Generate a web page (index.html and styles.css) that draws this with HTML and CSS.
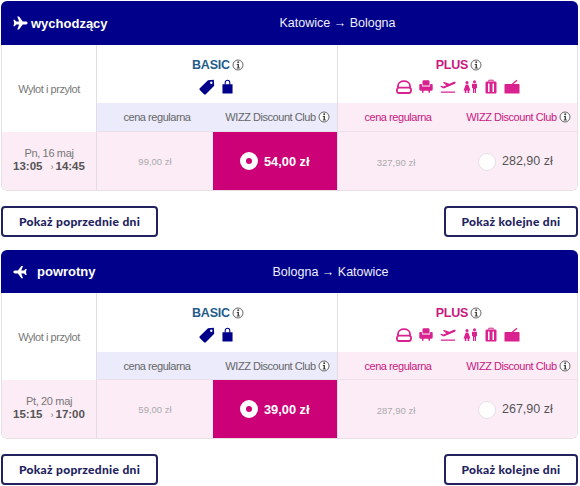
FILE: index.html
```html
<!DOCTYPE html>
<html lang="pl">
<head>
<meta charset="utf-8">
<title>Wybór lotu</title>
<link rel="stylesheet" href="styles.css">
</head>
<body>
<svg class="defs" width="0" height="0" aria-hidden="true">
  <defs>
    <symbol id="plane" viewBox="0 0 16 14"><path d="M15.6 7c0-.9-1-1.600-2-1.600H10.400L6.400 0H4.500L6.600 5.400H3.400L1.800 3.500H.4L1.200 7 .4 10.500H1.800L3.400 8.600H6.600L4.500 14H6.400L10.400 8.600H13.600C14.600 8.600 15.600 7.900 15.600 7Z"/></symbol>
    <symbol id="info" viewBox="0 0 12 12"><circle cx="6" cy="6" r="5" fill="#fff" stroke="#666" stroke-width="1"/><circle cx="6.200" cy="3.300" r="1" fill="#444"/><path d="M4.800 5H7V8.500H7.800V9.500H4.800V8.500H5.600V6H4.800Z" fill="#444"/></symbol>
    <symbol id="tag" viewBox="0 0 16 16"><path d="M9 1.200L14.800 .8 15.200 6.800 6.800 15.200C6.200 15.800 5.500 15.800 5 15.300L.8 11C.3 10.500.3 9.800.8 9.300Z M12.300 2.500A1.200 1.200 0 1 0 12.300 4.900 1.200 1.200 0 1 0 12.300 2.500Z" fill-rule="evenodd"/></symbol>
    <symbol id="bag" viewBox="0 0 12 16"><path d="M.5 5.500H11.500V15.500H.5Z"/><path d="M3.500 6V3.500C3.500 .5 8.500 .5 8.500 3.500V6" fill="none" stroke="currentColor" stroke-width="1.200"/></symbol>
    <symbol id="seat" viewBox="0 0 16 14"><path d="M2 8V6C2 -.4 14 -.4 14 6V8" fill="none" stroke="currentColor" stroke-width="1.800"/><path d="M3 7.600H13C15.800 7.600 15.800 13 13 13H3C.2 13 .2 7.600 3 7.600Z" fill="none" stroke="currentColor" stroke-width="1.800"/></symbol>
    <symbol id="chair" viewBox="0 0 14 13"><path d="M3.500 1.500C3.500 .7 4.200 .2 5 .2H9C9.800 .2 10.500 .7 10.500 1.500V5.500H3.500Z"/><path d="M.3 4.800C.3 3.800 3 3.800 3 4.800V6.500H11V4.800C11 3.800 13.700 3.800 13.700 4.800V9.500C13.700 10.300 13 10.800 12 10.800H11V12.800H9.500V10.800H4.500V12.800H3V10.800H2C1 10.800.3 10.300.3 9.500Z"/></symbol>
    <symbol id="takeoff" viewBox="0 0 16 13"><path d="M.3 6.500L1.300 5.700 3.500 6.400 6.300 5.200 2.800 2.600 4.300 2 9.400 3.700 12.800 2.200C14.300 1.500 15.700 1.800 15.700 2.500 15.700 3.200 14.800 3.800 13.800 4.300L4.300 8.300C3.600 8.600 3 8.400 2.500 8.100Z"/><path d="M1 11.500H15V12.800H1Z"/></symbol>
    <symbol id="people" viewBox="0 0 15 13"><circle cx="4" cy="2.500" r="1.500"/><circle cx="11.500" cy="1.700" r="1.500"/><path d="M2.800 4.500H5.200L7.500 10.500H.5ZM1.800 10.500H3.400V13H1.800ZM4.600 10.500H6.200V13H4.600Z"/><path d="M9 3.800H14V8.200H13V13H11.800V9H11.200V13H10V8.200H9Z"/></symbol>
    <symbol id="case" viewBox="0 0 12 14"><path d="M3.800 2V.7H8.200V2" fill="none" stroke="currentColor" stroke-width="1"/><path d="M2 2H10C11 2 11.500 2.500 11.500 3.500V12.500C11.500 13.500 11 14 10 14H2C1 14 .5 13.500 .5 12.500V3.500C.5 2.500 1 2 2 2ZM3 4V12.500H4.500V4ZM7.500 4V12.500H9V4Z" fill-rule="evenodd"/></symbol>
    <symbol id="laptop" viewBox="0 0 16 14"><path d="M.5 5.500C.5 4.900 .9 4.500 1.500 4.500H14.500C15.100 4.500 15.500 4.900 15.500 5.500V14H.5Z"/><path d="M8.500 4.500L13 .7" fill="none" stroke="currentColor" stroke-width="1.300"/></symbol>
  </defs>
</svg>

<main class="page">
  <section class="leg">
    <div class="panel">
      <header class="bar bar-out">
        <div class="bar-dir"><svg class="plane"><use href="#plane"/></svg><span>wychodzący</span></div>
        <div class="bar-route">Katowice → Bologna</div>
      </header>
      <div class="tbl">
        <div class="time-head">Wylot i przylot</div>
        <div class="fare basic">
          <div class="fare-name">BASIC<svg class="info"><use href="#info"/></svg></div>
          <div class="fare-icons">
            <svg class="ic-tag"><use href="#tag"/></svg><svg class="ic-bag"><use href="#bag"/></svg>
          </div>
        </div>
        <div class="fare plus">
          <div class="fare-name">PLUS<svg class="info"><use href="#info"/></svg></div>
          <div class="fare-icons">
            <svg class="ic-seat"><use href="#seat"/></svg><svg class="ic-chair"><use href="#chair"/></svg><svg class="ic-takeoff"><use href="#takeoff"/></svg><svg class="ic-people"><use href="#people"/></svg><svg class="ic-case"><use href="#case"/></svg><svg class="ic-laptop"><use href="#laptop"/></svg>
          </div>
        </div>
        <div class="sub sub-basic"><span class="sub-reg">cena regularna</span><span class="sub-club">WIZZ Discount Club<svg class="info"><use href="#info"/></svg></span></div>
        <div class="sub sub-plus"><span class="sub-reg">cena regularna</span><span class="sub-club">WIZZ Discount Club<svg class="info"><use href="#info"/></svg></span></div>
        <div class="time"><div class="day">Pn, 16 maj</div><div class="hours"><b>13:05</b><i>›</i><b>14:45</b></div></div>
        <div class="prices price-basic"><span class="old">99,00 zł</span><span class="sel"><span class="radio on"></span>54,00 zł</span></div>
        <div class="prices price-plus"><span class="old">327,90 zł</span><span class="opt"><span class="radio"></span>282,90 zł</span></div>
      </div>
    </div>
    <div class="nav">
      <button class="btn btn-prev">Pokaż poprzednie dni</button>
      <button class="btn btn-next">Pokaż kolejne dni</button>
    </div>
  </section>

  <section class="leg">
    <div class="panel">
      <header class="bar bar-back">
        <div class="bar-dir"><svg class="plane flip"><use href="#plane"/></svg><span>powrotny</span></div>
        <div class="bar-route">Bologna → Katowice</div>
      </header>
      <div class="tbl">
        <div class="time-head">Wylot i przylot</div>
        <div class="fare basic">
          <div class="fare-name">BASIC<svg class="info"><use href="#info"/></svg></div>
          <div class="fare-icons">
            <svg class="ic-tag"><use href="#tag"/></svg><svg class="ic-bag"><use href="#bag"/></svg>
          </div>
        </div>
        <div class="fare plus">
          <div class="fare-name">PLUS<svg class="info"><use href="#info"/></svg></div>
          <div class="fare-icons">
            <svg class="ic-seat"><use href="#seat"/></svg><svg class="ic-chair"><use href="#chair"/></svg><svg class="ic-takeoff"><use href="#takeoff"/></svg><svg class="ic-people"><use href="#people"/></svg><svg class="ic-case"><use href="#case"/></svg><svg class="ic-laptop"><use href="#laptop"/></svg>
          </div>
        </div>
        <div class="sub sub-basic"><span class="sub-reg">cena regularna</span><span class="sub-club">WIZZ Discount Club<svg class="info"><use href="#info"/></svg></span></div>
        <div class="sub sub-plus"><span class="sub-reg">cena regularna</span><span class="sub-club">WIZZ Discount Club<svg class="info"><use href="#info"/></svg></span></div>
        <div class="time"><div class="day">Pt, 20 maj</div><div class="hours"><b>15:15</b><i>›</i><b>17:00</b></div></div>
        <div class="prices price-basic"><span class="old">59,00 zł</span><span class="sel"><span class="radio on"></span>39,00 zł</span></div>
        <div class="prices price-plus"><span class="old">287,90 zł</span><span class="opt"><span class="radio"></span>267,90 zł</span></div>
      </div>
    </div>
    <div class="nav">
      <button class="btn btn-prev">Pokaż poprzednie dni</button>
      <button class="btn btn-next">Pokaż kolejne dni</button>
    </div>
  </section>
</main>
</body>
</html>
```
FILE: styles.css
```css
* { box-sizing: border-box; }
html, body { margin: 0; padding: 0; background: #fff; }
body { font-family: "Liberation Sans", Arial, sans-serif; color: #666; overflow: hidden; }
.defs { position: absolute; }
.page { width: 580px; height: 486px; padding: 1px 1px 0 1px; display: flex; flex-direction: column; gap: 13px; }
.leg { width: 577px; }
.panel { border-radius: 6px; overflow: hidden; }
.bar { display: grid; grid-template-columns: 96px 1fr; background: #00008a; color: #fff; height: 44px; align-items: center; }
.bar-back { height: 43px; }
.bar-dir { grid-column: 1; grid-row: 1; display: flex; align-items: center; font-size: 13px; font-weight: 700; white-space: nowrap; padding-left: 12px; }
.bar-route { grid-column: 1 / 3; grid-row: 1; font-size: 12.5px; text-align: center; padding-left: 96px; color: #f0f0fa; }
.bar-back .bar-route { padding-left: 82px; }
.plane { width: 15px; height: 14px; fill: #fff; margin-right: 3px; flex: none; }
.plane.flip { transform: scaleX(-1); width: 14px; margin-right: 10px; }
.tbl { display: grid; grid-template-columns: 95px 241px 239px; grid-template-rows: 58px 29px 58px; border: solid #e6dfe6; border-width: 0 1px 1px 1px; border-radius: 0 0 6px 6px; overflow: hidden; }
.bar-back + .tbl { grid-template-rows: 59px 28px 58px; }
.time-head { grid-column: 1; grid-row: 1 / 3; display: flex; align-items: center; justify-content: center; font-size: 11px; letter-spacing: -.45px; color: #777; border-right: 1px solid #e3dde3; }
.fare { text-align: center; padding-top: 12px; }
.basic { border-right: 1px solid #e3dde3; padding-left: 2px; }
.plus { padding-left: 3px; }
.fare-name { font-size: 12.5px; font-weight: 700; display: flex; justify-content: center; align-items: center; height: 15px; letter-spacing: -.2px; }
.basic .fare-name { color: #1f5c8c; }
.plus .fare-name { color: #c9187f; }
.info { width: 12px; height: 12px; margin-left: 2px; flex: none; }
.fare-icons { display: flex; justify-content: center; align-items: center; height: 17px; margin-top: 6px; gap: 7px; }
.basic .fare-icons { color: #00008a; fill: #00008a; gap: 7px; padding-right: 5px; }
.plus .fare-icons { color: #d9218f; fill: #d9218f; gap: 7px; padding-right: 3px; }
.ic-tag { width: 16px; height: 16px; }
.ic-bag { width: 11px; height: 15px; }
.ic-seat { width: 16px; height: 14px; }
.ic-chair { width: 14px; height: 13px; }
.ic-takeoff { width: 16px; height: 13px; }
.ic-people { width: 15px; height: 13px; }
.ic-case { width: 12px; height: 15px; }
.ic-laptop { width: 16px; height: 15px; }
.sub { grid-row: 2; display: grid; grid-template-columns: 116px 124px; align-items: center; font-size: 11px; letter-spacing: -.45px; text-align: center; white-space: nowrap; }
.sub-basic { grid-column: 2; background: #ebebfb; color: #666; border-right: 1px solid #e3dde3; border-bottom: 1px solid #e6e0ec; }
.sub-plus { grid-column: 3; background: #fcecf6; color: #c9187f; border-bottom: 1px solid #efdfea; }
.sub-reg { padding-left: 4px; }
.sub-club { display: flex; align-items: center; justify-content: center; padding-left: 5px; }
.time { background: #fcecf6; border-right: 1px solid #e3dde3; text-align: center; color: #777; padding-top: 15px; line-height: 13px; }
.day { font-size: 11px; letter-spacing: -.35px; }
.hours { color: #555; font-size: 11.5px; }
.hours i { font-style: normal; font-size: 9px; margin: 0 2px 0 8px; color: #777; font-weight: 400; }
.prices { display: grid; grid-template-columns: 116px 124px; background: #fcecf6; align-items: stretch; }
.price-basic { border-right: 1px solid #e3dde3; }
.old { display: flex; align-items: center; justify-content: center; font-size: 9.500px; color: #aaa; }
.price-basic .old { padding-top: 1px; }
.price-plus .old { padding-top: 2px; }
.sel { background: #cc0077; color: #fff; font-size: 12.800px; font-weight: 700; display: flex; align-items: center; padding-left: 27px; }
.opt { display: flex; align-items: center; padding-left: 24px; font-size: 12.500px; color: #555; }
.radio { width: 18px; height: 18px; border-radius: 50%; margin-right: 6px; background: #fff; flex: none; border: 1px solid #e8dfe6; }
.radio.on { border: 6px solid #fff; background: #cc0077; }
.opt .radio { margin-top: 2px; margin-right: 6px; }
.nav { display: flex; justify-content: space-between; margin-top: 15px; }
.btn { height: 31px; background: #fff; border: 2px solid #22225e; border-radius: 4px; color: #22225e; font-family: Lato, sans-serif; font-size: 12px; font-weight: 900; letter-spacing: .3px; padding: 0; }
.btn-prev { width: 157px; }
.btn-next { width: 134px; }
```
